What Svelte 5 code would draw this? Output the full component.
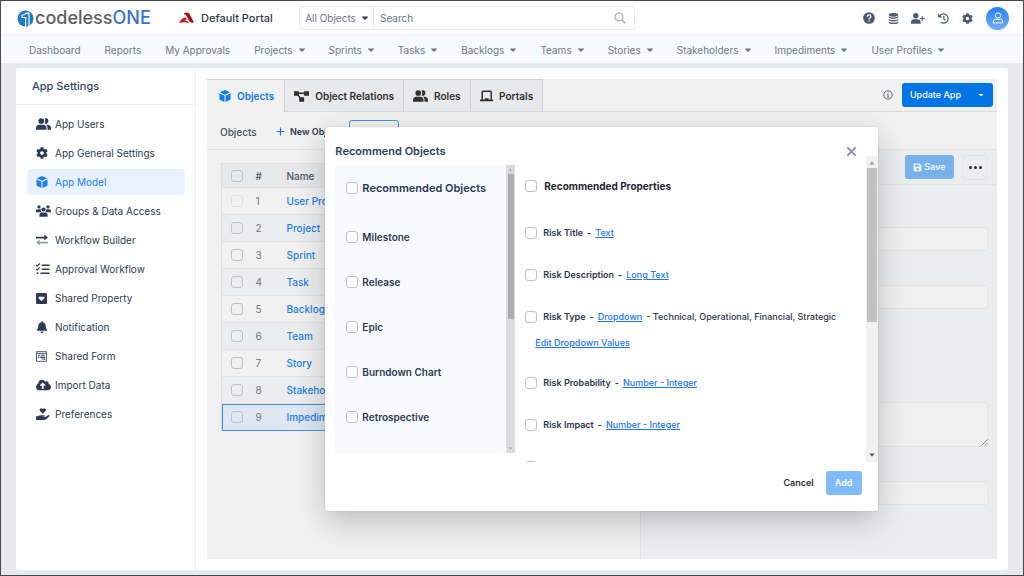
<script>
  const cog = '<path transform="scale(.03125)" d="M487.4 315.7l-42.6-24.6c4.3-23.2 4.3-47 0-70.2l42.6-24.6c4.9-2.8 7.1-8.6 5.5-14-11.1-35.6-30-67.8-54.7-94.6-3.8-4.1-10-5.1-14.8-2.3L380.8 110c-17.9-15.4-38.5-27.3-60.8-35.1V25.8c0-5.6-3.9-10.5-9.4-11.7-36.7-8.2-74.3-7.8-109.2 0-5.5 1.2-9.4 6.1-9.4 11.7V75c-22.2 7.9-42.8 19.8-60.8 35.1L88.7 85.5c-4.9-2.8-11-1.9-14.8 2.3-24.7 26.7-43.6 58.9-54.7 94.6-1.7 5.4.6 11.2 5.5 14L67.3 221c-4.3 23.2-4.3 47 0 70.2l-42.6 24.6c-4.9 2.8-7.1 8.6-5.5 14 11.1 35.6 30 67.8 54.7 94.6 3.8 4.1 10 5.1 14.8 2.3l42.6-24.6c17.9 15.4 38.5 27.3 60.8 35.1v49.2c0 5.6 3.9 10.5 9.4 11.7 36.7 8.2 74.3 7.8 109.2 0 5.5-1.2 9.4-6.1 9.4-11.7v-49.2c22.2-7.9 42.8-19.8 60.8-35.1l42.6 24.6c4.9 2.8 11 1.9 14.8-2.3 24.7-26.7 43.6-58.9 54.7-94.6 1.5-5.5-.7-11.3-5.6-14.1zM256 336c-44.1 0-80-35.9-80-80s35.9-80 80-80 80 35.9 80 80-35.9 80-80 80z"/>';

  const icons = {
    users: [20, 16, '<circle cx="7" cy="4" r="3.8"/><path d="M0 15.500v-2.300c0-2.400 1.900-4.200 4.300-4.200h5.400c2.400 0 4.300 1.800 4.300 4.200v2.300z"/><path d="M11.300.5a3.800 3.800 0 1 1 0 7q1-1.500 1-3.500t-1-3.500zM13.500 9h2c2.500 0 4.500 1.800 4.500 4.200v2.300h-4.600v-2.300q0-2.500-1.900-4.200z"/>'],
    cog: [16, 16, cog],
    cube: [16, 16, '<path d="M8 0l6.800 3L8 6.400 1.200 3zM.6 4.200l6.700 3.400V16L1.600 13.200a1.800 1.800 0 0 1-1-1.600zM15.400 4.200L8.700 7.600V16l5.700-2.800a1.800 1.800 0 0 0 1-1.600z"/>'],
    groups: [20, 16, '<circle cx="4" cy="2.600" r="2.200"/><circle cx="16" cy="2.600" r="2.200"/><circle cx="10" cy="6" r="2.800"/><path d="M0 9.500V8c0-1.500 1-2.500 2.500-2.500h2.700q.9 0 1.400.5-.4 2 .9 3.500zM20 9.500V8c0-1.500-1-2.500-2.500-2.500h-2.700q-.9 0-1.400.5.4 2-.9 3.500zM4.500 15.500v-2c0-2 1.500-3.500 3.500-3.500h4c2 0 3.500 1.500 3.500 3.500v2z"/>'],
    arrows: [16, 16, '<path d="M0 3.700h11V.8l5 4-5 4V5.900H0z"/><path opacity=".5" d="M16 10.300H5V7.500l-5 3.900 5 3.900v-2.800h11z"/>'],
    tasks: [18, 16, '<path d="M0 2.500l1.500 1.600L5 .7M0 7.700l1.500 1.600L5 5.900" fill="none" stroke="currentColor" stroke-width="1.500"/><circle cx="2" cy="13.500" r="1.300"/><path d="M7.500 2h10.500v2H7.500zM7.500 7.200H18v2H7.500zM6 12.500h12v2H6z"/>'],
    property: [16, 16, '<path fill-rule="evenodd" d="M2 0h12a2 2 0 0 1 2 2v12a2 2 0 0 1-2 2H2a2 2 0 0 1-2-2V2a2 2 0 0 1 2-2zM3.800 5.500v2L8 11.700l4.200-4.200v-2z"/>'],
    bell: [16, 16, '<path transform="translate(1 0) scale(.03125)" d="M224 512c35.300 0 64-28.600 64-64H160c0 35.400 28.700 64 64 64zm215.400-149.700c-19.300-20.800-55.500-52-55.500-154.300 0-77.700-54.500-139.900-127.900-155.200V32c0-17.700-14.300-32-32-32s-32 14.300-32 32v20.800C118.600 68.100 64.100 130.300 64.100 208c0 102.300-36.200 133.500-55.500 154.300-6 6.400-8.600 14.100-8.600 21.700.1 16.400 13 32 32.100 32h383.800c19.100 0 32-15.600 32.100-32 0-7.500-2.600-15.300-8.500-21.700z"/>'],
    form: [16, 16, '<path fill="none" stroke="currentColor" stroke-width="1.200" d="M.7 1h14.600v14H.7zM.7 3.500h14.600"/><path d="M3 5.500h3v1.500H3zM7 5.500h6v1.500H7zM3 8.500h2v1.500H3zM6 8.500h7v1.500H6zM8 11h2v1.500H8zM11 11h2v2h-2z"/>'],
    cloud: [20, 16, '<path transform="scale(.03125)" d="M537.600 226.600c4.100-10.700 6.400-22.400 6.400-34.600 0-53-43-96-96-96-19.700 0-38.100 6-53.300 16.200C367 64.200 315.300 32 256 32c-88.400 0-160 71.600-160 160 0 2.700.1 5.400.2 8.100C40.200 219.800 0 273.200 0 336c0 79.500 64.500 144 144 144h368c70.700 0 128-57.300 128-128 0-61.900-44-113.600-102.400-125.400zM393.400 288H328v112c0 8.800-7.200 16-16 16h-48c-8.800 0-16-7.200-16-16V288h-65.400c-14.300 0-21.400-17.200-11.300-27.300l105.400-105.400c6.200-6.200 16.400-6.200 22.600 0l105.400 105.400c10.100 10.100 2.900 27.300-11.300 27.300z"/>'],
    hand: [18, 16, '<path d="M9 7.800L5.400 4.100a2.200 2.200 0 0 1 3.200-3L9 1.500l.4-.4a2.200 2.200 0 0 1 3.200 3zM0 11h2.500q1.800-1.500 4-1.500h4.200c1.300 0 1.300 2 0 2H8.500v.6h4L16 9.700c1.200-.8 2.500.6 1.500 1.600l-4 3.700q-1 1-2.500 1H0z"/>'],
    question: [16, 16, '<circle cx="8" cy="8" r="7.800"/><path d="M5.600 6.200C5.700 4.600 6.700 3.900 8 3.900c1.400 0 2.500.8 2.500 2.100C10.500 7.700 8.100 7.700 8.100 9.500M8.100 11v1.700" stroke="#fff" stroke-width="1.700" fill="none"/>'],
    database: [16, 16, '<ellipse cx="8" cy="2.700" rx="7" ry="2.600"/><path d="M1 4.700q7 3.400 14 0v2q-7 3.800-14 0zM1 8.600q7 3.400 14 0v2q-7 3.800-14 0zM1 12.500q7 3.400 14 0v.8c0 3.600-14 3.600-14 0z"/>'],
    userplus: [20, 16, '<circle cx="7" cy="4" r="3.900"/><path d="M0 15.500v-2.300C0 10.800 1.900 9 4.300 9h5.400c2.400 0 4.300 1.800 4.300 4.200v2.300zM15.700 4.500h1.600v2.700H20v1.600h-2.700v2.700h-1.600V8.800H13V7.200h2.700z"/>'],
    history: [16, 16, '<path fill="none" stroke="currentColor" stroke-width="1.700" d="M2.300 4.500A6.700 6.700 0 1 1 4 13.400M8.500 4.500v4.200l2.700 1.600"/><path d="M.3.800v5.700h5.700z"/>'],
    relations: [20, 16, '<path d="M0 1.500h6.500v6H0zM13.500 1.500H20v6h-6.500zM7 9.700h6.500v6H7z"/><path d="M5 4.400h10M4.500 5.500l4.500 6" fill="none" stroke="currentColor" stroke-width="2"/>'],
    laptop: [18, 16, '<path fill="none" stroke="currentColor" stroke-width="2" d="M3 13V2.500q0-1 1-1h10q1 0 1 1V13"/><path d="M0 12.500h6.500V11h5v1.500H18v2.500H0z"/>'],
    plus: [16, 16, '<path d="M7 1h2v6h6v2H9v6H7V9H1V7h6z"/>'],
    save: [16, 16, '<path fill-rule="evenodd" d="M2 1h9.500L15 4.500V13a2 2 0 0 1-2 2H3a2 2 0 0 1-2-2V2zM3.500 3v3.700h7.500V3zM8 8.700a2.300 2.300 0 1 0 .01 0z"/>'],
    close: [16, 16, '<path d="M2 2l12 12M14 2L2 14" fill="none" stroke="currentColor" stroke-width="2.800"/>'],
    info: [16, 16, '<circle cx="8" cy="8" r="6.800" fill="none" stroke="currentColor" stroke-width="1.600"/><path d="M7 3.800h2v1.700H7zM6.300 7H9v4.200h1v1.300H6.300v-1.300h1V8.200h-1z"/>'],
    search: [16, 16, '<path d="M10.500 10.500L15 15" fill="none" stroke="currentColor" stroke-width="1.600"/><circle cx="6.500" cy="6.500" r="5.300" fill="none" stroke="currentColor" stroke-width="1.400"/>'],
    person: [16, 16, '<g fill="none" stroke="currentColor" stroke-width="1.300"><circle cx="8" cy="4.700" r="3.500"/><path d="M4.500 9.200Q1.500 10.500 1.500 14.500h13q0-4-3-5.300Q8 11.500 4.500 9.200z"/></g>'],
    caret: [16, 16, '<path d="M0 4h16v1.500l-7 7H7l-7-7z"/>'],
    up: [16, 16, '<path d="M1 12l7-8 7 8z"/>'],
    down: [16, 16, '<path d="M1 4l7 8 7-8z"/>'],
    grip: [16, 16, '<path d="M1 15L15 1M9 15l6-6" fill="none" stroke="currentColor" stroke-width="2"/>'],
  };

  const nav = [
    ['Dashboard', false], ['Reports', false], ['My Approvals', false], ['Projects', true],
    ['Sprints', true], ['Tasks', true], ['Backlogs', true], ['Teams', true], ['Stories', true],
    ['Stakeholders', true], ['Impediments', true], ['User Profiles', true],
  ];
  const settings = [
    ['users', 'App Users'], ['cog', 'App General Settings'], ['cube', 'App Model'],
    ['groups', 'Groups & Data Access'], ['arrows', 'Workflow Builder'], ['tasks', 'Approval Workflow'],
    ['property', 'Shared Property'], ['bell', 'Notification'], ['form', 'Shared Form'],
    ['cloud', 'Import Data'], ['hand', 'Preferences'],
  ];
  const tabs = [['cube', 'Objects'], ['relations', 'Object Relations'], ['users', 'Roles'], ['laptop', 'Portals']];
  const objects = ['User Profile', 'Project', 'Sprint', 'Task', 'Backlog', 'Team', 'Story', 'Stakeholder', 'Impediment'];
  const recommended = ['Milestone', 'Release', 'Epic', 'Burndown Chart', 'Retrospective'];
  const properties = [
    { name: 'Risk Title', type: 'Text' },
    { name: 'Risk Description', type: 'Long Text' },
    { name: 'Risk Type', type: 'Dropdown', values: 'Technical, Operational, Financial, Strategic' },
    { name: 'Risk Probability', type: 'Number - Integer' },
    { name: 'Risk Impact', type: 'Number - Integer' },
  ];
</script>

{#snippet icon(name, size)}
  <svg class="icon" aria-hidden="true" height={size} width={(size * icons[name][0]) / 16} viewBox="0 0 {icons[name][0]} {icons[name][1]}" fill="currentColor">{@html icons[name][2]}</svg>
{/snippet}

<div class="app">
  <header class="top">
    <a class="brand" href="#home">
      <svg width="17" height="17" viewBox="0 0 17 17" aria-hidden="true">
        <circle cx="8.500" cy="8.500" r="8" fill="#1f78c8" />
        <path d="M5 5.200Q8 5 9 3.200H12V17H8.600V7.500H5z" fill="#1f78c8" stroke="#fff" stroke-width="1.200" />
      </svg>
      <span class="wordmark">codeless<b>ONE</b></span>
    </a>
    <a class="portal" href="#portal">
      <svg width="15" height="12" viewBox="0 0 15 12" aria-hidden="true">
        <path d="M4.500 1.800Q8-.8 10.300 1.500L15 10.500Q12 11.500 10 9L8 4.500Q7 2.300 4.500 1.800z" fill="#a80f0f" />
        <path d="M0 11Q2 6.500 7 5.200L8 7.200Q6 7.500 5.500 8.500Q8 8 10.500 11Q5 9.500 0 11z" fill="#c01a1a" />
      </svg>
      Default Portal
    </a>
    <div class="search">
      <button class="scope">All Objects {@render icon('caret', 6)}</button>
      <input type="search" placeholder="Search" aria-label="Search" />
      <button class="find" aria-label="Run search">{@render icon('search', 12)}</button>
    </div>
    <div class="tools">
      <button aria-label="Help">{@render icon('question', 12)}</button>
      <button aria-label="Data">{@render icon('database', 11)}</button>
      <button aria-label="Add user">{@render icon('userplus', 11)}</button>
      <button aria-label="History">{@render icon('history', 11)}</button>
      <button aria-label="Settings">{@render icon('cog', 11)}</button>
      <button class="avatar" aria-label="Account">{@render icon('person', 12)}</button>
    </div>
  </header>

  <nav class="menu">
    {#each nav as [label, more]}
      <a href="#{label}">{label}{#if more}{@render icon('caret', 6)}{/if}</a>
    {/each}
  </nav>

  <div class="page">
    <aside>
      <h2>App Settings</h2>
      <ul>
        {#each settings as [glyph, label]}
          <li><a href="#{glyph}" class:active={label === 'App Model'}><span class="glyph">{@render icon(glyph, glyph === 'property' || glyph === 'form' ? 11 : 12)}</span>{label}</a></li>
        {/each}
      </ul>
    </aside>

    <main>
      <div class="workspace">
        <div class="tabs">
          {#each tabs as [glyph, label], i}
            <button class="tab" class:current={i === 0}>{@render icon(glyph, 12)}{label}</button>
          {/each}
          <div class="update">
            {@render icon('info', 10)}
            <div class="split"><button>Update App</button><button aria-label="More update options">{@render icon('caret', 4)}</button></div>
          </div>
        </div>

        <div class="bar">
          <h3>Objects</h3>
          <button class="new">{@render icon('plus', 9)} New Object</button>
          <button class="outlined" aria-label="Recommend"></button>
        </div>

        <div class="panes">
          <div class="listing">
            <table>
              <thead>
                <tr><th><input type="checkbox" aria-label="Select all" /></th><th>#</th><th>Name</th></tr>
              </thead>
              <tbody>
                {#each objects as name, i}
                  <tr class:selected={i === 8}>
                    <td><input type="checkbox" aria-label="Select {name}" disabled={i === 0} /></td>
                    <td>{i + 1}</td>
                    <td><a href="#{name}">{name}</a></td>
                  </tr>
                {/each}
              </tbody>
            </table>
          </div>
          <form class="detail">
            <div class="actions">
              <button type="button" class="save">{@render icon('save', 9)}Save</button>
              <button type="button" class="dots" aria-label="More"><i></i><i></i><i></i></button>
            </div>
            <div class="fields">
              <input type="text" aria-label="Name" />
              <input type="text" aria-label="Plural name" />
              <div class="area"><textarea aria-label="Description"></textarea>{@render icon('grip', 7)}</div>
              <input type="text" aria-label="Category" />
            </div>
          </form>
        </div>

        <div class="overlay">
          <div class="dialog" role="dialog" aria-labelledby="dialog-title">
            <div class="dialog-head">
              <h2 id="dialog-title">Recommend Objects</h2>
              <button aria-label="Close">{@render icon('close', 11)}</button>
            </div>
            <div class="dialog-body">
              <div class="choices">
                <label class="lead"><input type="checkbox" />Recommended Objects</label>
                {#each recommended as name}
                  <label><input type="checkbox" />{name}</label>
                {/each}
              </div>
              <div class="rail slim" aria-hidden="true">{@render icon('up', 5)}<span></span>{@render icon('down', 5)}</div>
              <div class="props">
                <label class="lead"><input type="checkbox" />Recommended Properties</label>
                {#each properties as p}
                  <div class="prop">
                    <label><input type="checkbox" />{p.name}</label>
                    <span>-</span>
                    <a href="#type">{p.type}</a>
                    {#if p.values}<span class="values">- {p.values}</span>{/if}
                  </div>
                  {#if p.values}<a class="edit" href="#values">Edit Dropdown Values</a>{/if}
                {/each}
                <div class="prop"><input type="checkbox" aria-label="Select property" /></div>
              </div>
              <div class="rail wide" aria-hidden="true">{@render icon('up', 6)}<span></span>{@render icon('down', 6)}</div>
            </div>
            <div class="dialog-foot">
              <button class="cancel">Cancel</button>
              <button class="add">Add</button>
            </div>
          </div>
        </div>
      </div>
    </main>
  </div>
</div>

<style>
  :global(body) { margin: 0; background: #e6eaee; }
  * { box-sizing: border-box; }
  .app {
    min-height: 100vh; display: flex; flex-direction: column;
    border: 1px solid #46484c; background: #e6eaee; color: #2c3a55;
    font: 11px/14px Inter, "Liberation Sans", sans-serif;
  }
  button, input, textarea { font: inherit; color: inherit; }
  button { border: 0; padding: 0; margin: 0; background: none; display: flex; align-items: center; justify-content: center; white-space: nowrap; }
  a { color: inherit; text-decoration: none; }
  h2, h3, ul { margin: 0; padding: 0; font-weight: 400; }
  li { list-style: none; }
  .icon { display: block; flex: none; }
  input[type="checkbox"] {
    appearance: none; width: 12px; height: 12px; margin: 0; flex: none;
    border: 1px solid #bcc2ca; border-radius: 3px; background: transparent;
  }

  .top { height: 35px; background: #fff; border-bottom: 1px solid #e9ebee; display: flex; align-items: center; padding: 0 14px 0 16px; }
  .brand { display: flex; align-items: center; gap: 1px; width: 162px; }
  .wordmark { font: 500 18px/22px Inter, sans-serif; color: #5c5e61; }
  .wordmark b { font-weight: 500; color: #3b72cc; }
  .portal { display: flex; align-items: center; gap: 7px; width: 120px; font-size: 11px; font-weight: 500; color: #2f3a4c; white-space: nowrap; }
  .search { display: flex; width: 336px; height: 24px; border: 1px solid #e8eaec; border-radius: 3px; }
  .scope { width: 74px; gap: 6px; border-right: 1px solid #e8eaec; color: #6a7686; font-size: 10px; }
  .scope .icon { color: #2c3a55; }
  .search input { flex: 1; min-width: 0; border: 0; padding: 0 6px; outline: 0; background: none; font-size: 10px; }
  .search input::placeholder { color: #6a7686; opacity: 1; }
  .find { width: 28px; color: #9aa3ae; }
  .tools { margin-left: auto; display: flex; align-items: center; gap: 12px; color: #4b5975; }
  .tools button { min-width: 12px; }
  .tools .avatar { width: 23px; height: 23px; margin-left: 1px; border-radius: 50%; color: #fff; background: linear-gradient(#2980ee, #72adfa); }

  .menu { height: 27px; background: #f9fafd; display: flex; align-items: center; gap: 24px; padding: 0 28px; color: #6c7888; font-size: 10px; white-space: nowrap; }
  .menu a { display: flex; align-items: center; gap: 6px; }

  .page { flex: 1; margin: 5px 15px 5px 15px; background: #fff; border-radius: 3px; display: flex; }
  aside { width: 180px; flex: none; border-right: 1px solid #eceef1; }
  aside h2 { height: 37px; line-height: 36px; padding-left: 16px; border-bottom: 1px solid #eceef1; font-size: 11px; font-weight: 500; color: #37465c; }
  aside ul { display: flex; flex-direction: column; gap: 3px; padding: 6px 10px 6px 11px; }
  aside li a { height: 26px; display: flex; align-items: center; padding-left: 9px; border-radius: 4px; font-size: 10px; color: #2b3b50; }
  aside li a.active { background: #e8f1fc; color: #1f7df5; }
  .glyph { width: 19px; color: #2c3a55; }
  .active .glyph { color: #1f7df5; }

  main { flex: 1; min-width: 0; padding: 11px; display: flex; }
  .workspace { position: relative; flex: 1; min-width: 0; background: #f1f1f1; display: flex; flex-direction: column; }
  .tabs { height: 33px; display: flex; border-bottom: 1px solid #d9dbdd; }
  .tab { gap: 6px; height: 32px; padding: 0 9px; border: 1px solid #cfd2d5; border-left-width: 0; border-bottom-width: 0; background: #e7e9eb; color: #303030; font-size: 10px; font-weight: 600; }
  .tab.current { height: 33px; padding: 0 10px 1px 12px; background: #f1f1f1; color: #0d7be8; }
  .update { margin-left: auto; display: flex; align-items: center; gap: 9px; padding-right: 4px; color: #5e6670; }
  .split { display: flex; height: 24px; border-radius: 3px; background: #0275e6; color: #fff; font-size: 9px; font-weight: 500; }
  .split button:first-child { padding: 0 8px; }
  .split button:last-child { width: 24px; }

  .bar { height: 38px; display: flex; align-items: center; padding: 2px 0 0 13px; border-bottom: 1px solid #e0e2e5; }
  .bar h3 { font-size: 10px; font-weight: 500; width: 56px; color: #44505f; }
  .new { gap: 5px; width: 73px; font-size: 9px; font-weight: 600; color: #2c3a4b; justify-content: flex-start; }
  .new .icon { color: #1478e0; }
  .outlined { width: 50px; height: 24px; border: 1px solid #4393e6; border-radius: 3px; }

  .panes { flex: 1; display: flex; }
  .listing { width: 434px; padding: 13px 14px; border-right: 1px solid #dee0e3; }
  table { width: 100%; border-collapse: collapse; border: 1px solid #dcdfe2; color: #6c7580; font-size: 10px; }
  th, td { padding: 0; height: 27px; text-align: left; font-weight: 500; border-bottom: 1px solid #dfe1e4; }
  td { font-weight: 400; }
  th { height: 24px; background: #e7e8ea; color: #4c5765; }
  th:first-child, td:first-child { width: 34px; padding-left: 9px; }
  th:nth-child(2), td:nth-child(2) { width: 31px; }
  th input, td input { display: block; }
  tbody tr:nth-child(even) { background: #ecedef; }
  tbody tr.selected { background: #dfe7f2; outline: 1px solid #3f90e4; outline-offset: -1px; }
  td a { color: #1b7ddd; font-weight: 500; }
  td input:disabled { border-color: #dcdee0; }

  .detail { flex: 1; min-width: 0; background: #ecedef; }
  .actions { height: 35px; display: flex; justify-content: flex-end; align-items: center; gap: 9px; padding-right: 9px; border-bottom: 1px solid #e0e2e4; }
  .save { width: 49px; height: 24px; gap: 2px; border-radius: 3px; background: #77b0ea; color: #edf3fa; font-size: 9px; font-weight: 600; }
  .dots { width: 25px; height: 25px; gap: 2px; border: 1px solid #e2e4e6; border-radius: 3px; }
  .dots i { width: 3px; height: 3px; border-radius: 50%; background: #1f2b42; }
  .fields { display: flex; flex-direction: column; padding: 42px 8px 0 14px; gap: 34px; }
  .fields input { width: 100%; height: 24px; border: 1px solid #e2e3e5; border-radius: 4px; background: #f0f0f0; }
  .area { position: relative; margin-top: 59px; height: 45px; }
  .area textarea { display: block; width: 100%; height: 45px; resize: none; border: 1px solid #e2e3e5; border-radius: 4px; background: #f0f0f0; }
  .area .icon { position: absolute; right: 1px; bottom: 1px; color: #777; }

  .overlay { position: absolute; inset: 0; display: flex; justify-content: center; align-items: center; padding-right: 1px; }
  .dialog { width: 70%; height: 80%; background: #fff; border-radius: 3px; display: flex; flex-direction: column; box-shadow: 0 10px 30px rgba(0, 0, 0, .22), 0 0 2px rgba(0, 0, 0, .15); }
  .dialog-head { height: 29px; flex: none; display: flex; justify-content: space-between; align-items: flex-start; padding: 17px 21px 0 10px; }
  .dialog-head h2 { font-size: 11px; font-weight: 600; color: #2f3f58; }
  .dialog-head button { height: 14px; color: #8791a2; }
  .dialog-body { flex: 1; min-height: 0; display: flex; padding-left: 10px; }
  .choices { width: 171px; margin: 9px 0; padding-left: 11px; background: #f9fafd; overflow: hidden; }
  .choices label { height: 45px; gap: 4px; display: flex; align-items: center; font-size: 10px; font-weight: 600; color: #2c3a50; white-space: nowrap; }
  .choices .lead { margin-bottom: 4px; font-size: 11px; color: #253858; }
  .choices input, .props input { background: #fff; }
  .rail { display: flex; flex-direction: column; align-items: center; flex: none; }
  .rail span { flex: none; margin: 2px 0 auto; }
  .slim { width: 9px; margin: 9px 0; padding: 2px 0; background: #dcdcdc; color: #b0b0b0; }
  .slim span { width: 6px; height: 145px; background: #acacac; }
  .wide { width: 12px; padding: 4px 0; background: #f1f1f1; color: #9c9c9c; }
  .wide span { width: 10px; height: 154px; background: #c1c1c1; }
  .wide .icon:last-child { color: #505050; }
  .props { flex: 1; min-width: 0; padding: 9px 0 0 10px; overflow: hidden; }
  .props .lead { height: 42px; margin-bottom: 5px; display: flex; align-items: center; gap: 7px; font-size: 10px; font-weight: 700; color: #1f2633; }
  .prop { height: 42px; display: flex; align-items: center; gap: 4px; white-space: nowrap; color: #2c3648; font-size: 9px; font-weight: 600; }
  .prop label { display: flex; align-items: center; gap: 6px; }
  .prop a, .edit { color: #1f74f0; font-size: 9px; font-weight: 500; text-decoration: underline; }
  .values { font-weight: 500; }
  .edit { display: block; height: 24px; padding-left: 10px; line-height: 10px; }
  .dialog-foot { height: 49px; flex: none; display: flex; align-items: flex-start; justify-content: flex-end; gap: 12px; padding: 9px 16px 0 0; font-size: 9px; font-weight: 600; }
  .cancel, .add { height: 24px; }
  .cancel { color: #2a2f36; }
  .add { width: 36px; border-radius: 3px; background: #80bcfb; color: #fff; }
</style>
